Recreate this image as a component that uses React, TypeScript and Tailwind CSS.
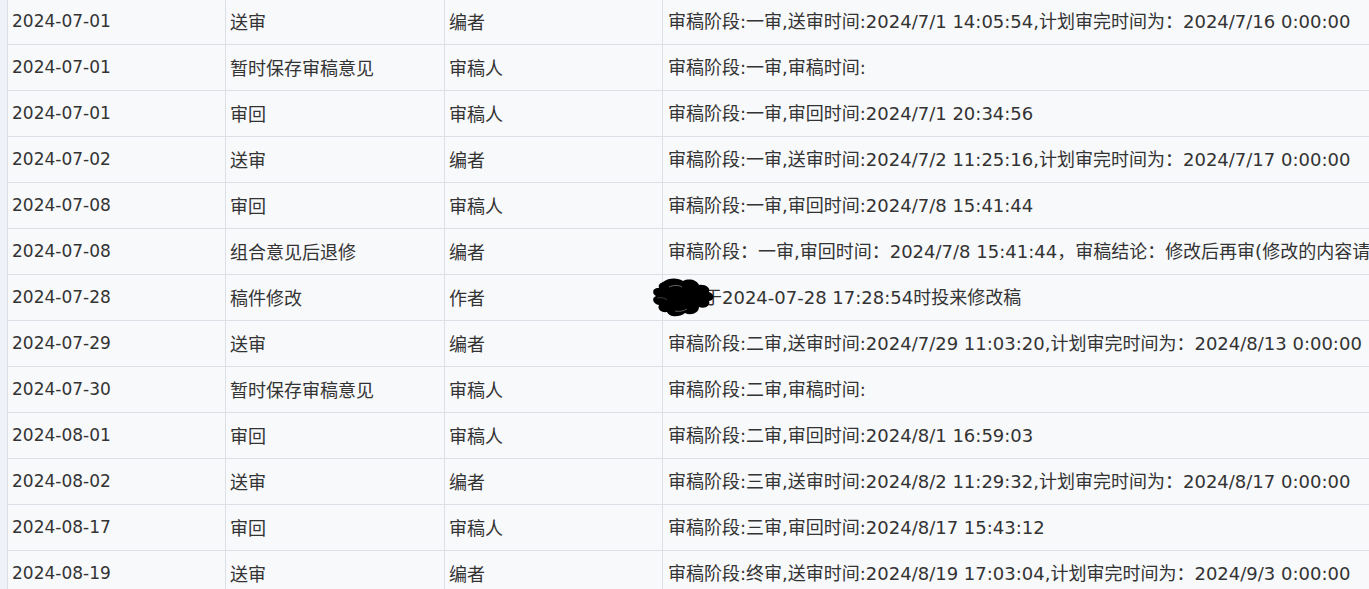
const rows: [string, string, string, string][] = [
  ['2024-07-01', '送审', '编者', '审稿阶段:一审,送审时间:2024/7/1 14:05:54,计划审完时间为：2024/7/16 0:00:00'],
  ['2024-07-01', '暂时保存审稿意见', '审稿人', '审稿阶段:一审,审稿时间:'],
  ['2024-07-01', '审回', '审稿人', '审稿阶段:一审,审回时间:2024/7/1 20:34:56'],
  ['2024-07-02', '送审', '编者', '审稿阶段:一审,送审时间:2024/7/2 11:25:16,计划审完时间为：2024/7/17 0:00:00'],
  ['2024-07-08', '审回', '审稿人', '审稿阶段:一审,审回时间:2024/7/8 15:41:44'],
  ['2024-07-08', '组合意见后退修', '编者', '审稿阶段：一审,审回时间：2024/7/8 15:41:44，审稿结论：修改后再审(修改的内容请标注)'],
  ['2024-07-28', '稿件修改', '作者', '作者于2024-07-28 17:28:54时投来修改稿'],
  ['2024-07-29', '送审', '编者', '审稿阶段:二审,送审时间:2024/7/29 11:03:20,计划审完时间为：2024/8/13 0:00:00'],
  ['2024-07-30', '暂时保存审稿意见', '审稿人', '审稿阶段:二审,审稿时间:'],
  ['2024-08-01', '审回', '审稿人', '审稿阶段:二审,审回时间:2024/8/1 16:59:03'],
  ['2024-08-02', '送审', '编者', '审稿阶段:三审,送审时间:2024/8/2 11:29:32,计划审完时间为：2024/8/17 0:00:00'],
  ['2024-08-17', '审回', '审稿人', '审稿阶段:三审,审回时间:2024/8/17 15:43:12'],
  ['2024-08-19', '送审', '编者', '审稿阶段:终审,送审时间:2024/8/19 17:03:04,计划审完时间为：2024/9/3 0:00:00'],
];

// redaction scribble over the author's name
function Blot() {
  return (
    <svg className="pointer-events-none absolute left-[-19px] top-[-8px]" width="68" height="42" viewBox="0 0 68 42">
      <path
        d="M14 6 C20 1 30 2 34 5 C40 2 48 4 50 9 C56 8 62 12 60 16 C66 18 66 24 60 25 C62 30 56 33 50 31 C50 37 42 40 36 37 C30 42 20 41 18 36 C12 37 8 33 10 29 C4 28 2 22 7 20 C2 17 4 11 10 12 C9 9 11 7 14 6 Z"
        fill="#000"
      />
      <path d="M20 11 C24 9 30 9 33 11" stroke="#6a6a6a" strokeWidth="1" fill="none" />
      <path d="M26 35 C30 36 35 35 38 33" stroke="#5a5a5a" strokeWidth="1" fill="none" />
      <path d="M8 22 C12 21 16 22 18 24" stroke="#3a3a3a" strokeWidth="1" fill="none" />
    </svg>
  );
}

export default function App() {
  return (
    <div className="h-[589px] w-[1369px] overflow-hidden bg-[#eef1f5] pl-[7px] font-['Noto_Sans_CJK_SC',sans-serif] text-[18px] text-[#333]">
      <div className="-mt-[2px] border-l border-[#dcdfe6] bg-[#f8f9fb]">
        {rows.map((r, i) => (
          <div key={i} className="grid h-[46px] grid-cols-[218px_219px_218px_1fr] border-t border-[#dcdfe6]">
            <div className="flex items-center whitespace-nowrap border-r border-[#dcdfe6] pl-[4px] font-['DejaVu_Sans',sans-serif] text-[17px]">
              {r[0]}
            </div>
            <div className="flex items-center whitespace-nowrap border-r border-[#dcdfe6] pl-[4px]">{r[1]}</div>
            <div className="flex items-center whitespace-nowrap border-r border-[#dcdfe6] pl-[4px]">{r[2]}</div>
            {i === 6 ? (
              <div className="flex items-center whitespace-nowrap pl-[5px] font-['DejaVu_Sans','Noto_Sans_CJK_SC',sans-serif]">
                <span className="relative">
                  {r[3]}
                  <Blot />
                </span>
              </div>
            ) : (
              <div className="flex items-center overflow-hidden whitespace-nowrap pl-[5px] font-['DejaVu_Sans','Noto_Sans_CJK_SC',sans-serif]">
                {r[3]}
              </div>
            )}
          </div>
        ))}
      </div>
    </div>
  );
}
